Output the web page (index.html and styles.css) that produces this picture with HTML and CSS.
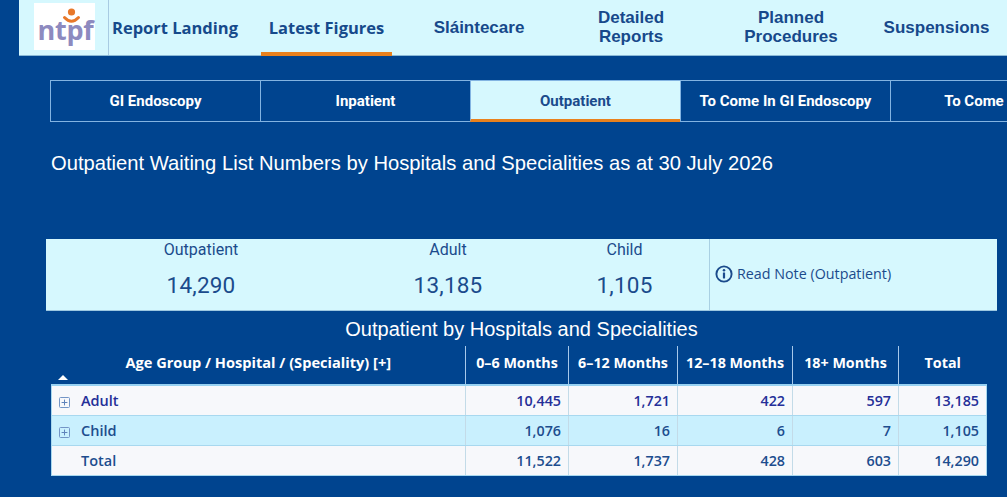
FILE: index.html
```html
<!DOCTYPE html>
<html lang="en">
<head>
<meta charset="utf-8">
<title>Latest Figures - Outpatient</title>
<link rel="stylesheet" href="styles.css">
</head>
<body>
<header class="topbar">
  <div class="brand">
    <div class="logo">
      <span class="logo-text">ntpf</span>
      <svg class="logo-mark" width="61" height="47" viewBox="0 0 61 47" aria-hidden="true">
        <circle cx="36.5" cy="9" r="3.6" fill="#e8782a"/>
        <path d="M29.5 14.5 Q36.5 22 43.5 14.5" fill="none" stroke="#e8782a" stroke-width="3" stroke-linecap="round"/>
      </svg>
    </div>
  </div>
  <nav class="menu">
    <a class="menu-item seg">Report Landing</a>
    <a class="menu-item seg active">Latest Figures</a>
    <a class="menu-item">Sláintecare</a>
    <a class="menu-item">Detailed<br>Reports</a>
    <a class="menu-item">Planned<br>Procedures</a>
    <a class="menu-item">Suspensions</a>
  </nav>
</header>

<div class="tabs">
  <div class="tab">GI Endoscopy</div>
  <div class="tab">Inpatient</div>
  <div class="tab active">Outpatient</div>
  <div class="tab">To Come In GI Endoscopy</div>
  <div class="tab tab-wide">To Come In Inpatient</div>
</div>

<h1 class="page-title">Outpatient Waiting List Numbers by Hospitals and Specialities as at 30 July 2026</h1>

<section class="kpi">
  <div class="kpi-cell">
    <div class="kpi-label">Outpatient</div>
    <div class="kpi-value">14,290</div>
  </div>
  <div class="kpi-cell">
    <div class="kpi-label">Adult</div>
    <div class="kpi-value">13,185</div>
  </div>
  <div class="kpi-cell">
    <div class="kpi-label">Child</div>
    <div class="kpi-value">1,105</div>
  </div>
  <div class="kpi-note">
    <svg class="info-icon" width="18" height="18" viewBox="0 0 18 18" aria-hidden="true">
      <circle cx="9" cy="9" r="7.6" fill="none" stroke="#1b4b8c" stroke-width="1.9"/>
      <circle cx="9" cy="5.3" r="1.25" fill="#1b4b8c"/>
      <rect x="7.9" y="7.4" width="2.2" height="6" rx="0.4" fill="#1b4b8c"/>
    </svg>
    <span>Read Note (Outpatient)</span>
  </div>
</section>

<div class="table-title">Outpatient by Hospitals and Specialities</div>

<table class="matrix">
  <thead>
    <tr>
      <th class="th-name c-name">Age Group / Hospital / (Speciality) [+]<span class="sort-arrow"></span></th>
      <th class="c-a">0–6 Months</th>
      <th class="c-b">6–12 Months</th>
      <th class="c-c">12–18 Months</th>
      <th class="c-d">18+ Months</th>
      <th class="c-e">Total</th>
    </tr>
  </thead>
  <tbody>
    <tr class="row-adult">
      <td class="name"><svg class="expand" width="11" height="11" viewBox="0 0 11 11" aria-hidden="true"><rect x="0.5" y="0.5" width="10" height="10" rx="1" fill="none" stroke="#7395c6"/><path d="M5.5 2.6v5.8M2.6 5.5h5.8" stroke="#5f83bb" stroke-width="1"/></svg>Adult</td>
      <td>10,445</td><td>1,721</td><td>422</td><td>597</td><td>13,185</td>
    </tr>
    <tr class="row-child">
      <td class="name"><svg class="expand" width="11" height="11" viewBox="0 0 11 11" aria-hidden="true"><rect x="0.5" y="0.5" width="10" height="10" rx="1" fill="none" stroke="#7395c6"/><path d="M5.5 2.6v5.8M2.6 5.5h5.8" stroke="#5f83bb" stroke-width="1"/></svg>Child</td>
      <td>1,076</td><td>16</td><td>6</td><td>7</td><td>1,105</td>
    </tr>
    <tr class="row-total">
      <td class="name total-name">Total</td>
      <td>11,522</td><td>1,737</td><td>428</td><td>603</td><td>14,290</td>
    </tr>
  </tbody>
</table>
</body>
</html>
```

FILE: styles.css
```css
html, body {
  margin: 0;
  padding: 0;
}
body {
  background: #00448f;
  width: 1007px;
  height: 497px;
  overflow: hidden;
  font-family: "Liberation Sans", Arial, sans-serif;
}

/* ---------- top bar ---------- */
.topbar {
  margin-left: 19px;
  height: 55px;
  background: #d6f8fe;
  border-bottom: 1px solid #8bb9d6;
  display: flex;
}
.brand {
  width: 91px;
  box-sizing: border-box;
  border-right: 1px solid #a8cbe2;
  padding-left: 15px;
}
.logo {
  position: relative;
  margin-top: 3px;
  width: 61px;
  height: 47px;
  background: #ffffff;
  display: flex;
  align-items: flex-end;
  justify-content: center;
}
.logo-text {
  font-family: "Open Sans", "DejaVu Sans", sans-serif;
  font-weight: 700;
  font-size: 27px;
  line-height: 27px;
  color: #8d8abf;
  letter-spacing: -0.3px;
  margin-bottom: 7px;
  margin-left: 2px;
}
.logo-mark {
  position: absolute;
  left: 1px;
  top: 0;
}
.menu {
  display: grid;
  grid-template-columns: 132px 171px 134px 170px 150px 141px;
  height: 55px;
}
.menu-item {
  position: relative;
  display: flex;
  align-items: center;
  justify-content: center;
  text-align: center;
  color: #17498b;
  font-family: "Liberation Sans", Arial, sans-serif;
  font-weight: 700;
  font-size: 17px;
  line-height: 19px;
  padding-bottom: 1px;
}
.menu-item.seg {
  font-family: "Open Sans", "Noto Sans", sans-serif;
  font-size: 16.5px;
  color: #164a8b;
}
.menu-item.active::after {
  content: "";
  position: absolute;
  left: 20px;
  right: 20px;
  bottom: -1px;
  height: 4px;
  background: #e9811d;
}

/* ---------- tabs ---------- */
.tabs {
  display: flex;
  margin: 24px 0 0 50px;
  width: max-content;
}
.tab {
  width: 211px;
  height: 42px;
  box-sizing: border-box;
  border: 1px solid #83b4e2;
  margin-right: -1px;
  display: flex;
  align-items: center;
  justify-content: center;
  color: #ffffff;
  font-family: Roboto, "Liberation Sans", sans-serif;
  font-weight: 700;
  font-size: 15px;
  white-space: nowrap;
}
.tab.tab-wide {
  width: 248px;
}
.tab.active {
  background: #d6f8fe;
  color: #1b4b8c;
  border-bottom: 3px solid #e9811d;
  padding-top: 2px;
}

/* ---------- title ---------- */
.page-title {
  margin: 29px 0 0 51px;
  font-family: "Liberation Sans", Arial, sans-serif;
  font-weight: 400;
  font-size: 20.2px;
  line-height: 24px;
  color: #ffffff;
}

/* ---------- KPI card ---------- */
.kpi {
  margin: 64px 0 0 46px;
  width: 951px;
  height: 72px;
  box-sizing: border-box;
  background: #d6f8fe;
  border-bottom: 1px solid #9cc7e0;
  display: grid;
  grid-template-columns: 310px 184px 169px 288px;
}
.kpi-cell {
  display: flex;
  flex-direction: column;
  align-items: center;
  padding-top: 1px;
  color: #1b4b8c;
  font-family: Roboto, "Liberation Sans", sans-serif;
}
.kpi-label {
  font-size: 16px;
  line-height: 20px;
}
.kpi-value {
  margin-top: 11px;
  font-size: 22.5px;
  line-height: 28px;
  letter-spacing: 0.2px;
}
.kpi-note {
  border-left: 1px solid #a9d0e3;
  display: flex;
  align-items: center;
  gap: 4px;
  padding-left: 5px;
  padding-bottom: 2px;
  color: #1b4b8c;
  font-family: "Open Sans", "DejaVu Sans", sans-serif;
  font-size: 14.3px;
}

/* ---------- table ---------- */
.table-title {
  margin: 6px 0 0 46px;
  width: 951px;
  text-align: center;
  font-family: "Liberation Sans", Arial, sans-serif;
  font-size: 20px;
  line-height: 24px;
  color: #ffffff;
}
.matrix {
  margin: 5px 0 0 51px;
  width: 935px;
  table-layout: fixed;
  border-collapse: collapse;
  border-spacing: 0;
  font-family: "Open Sans", "Noto Sans", sans-serif;
}
.matrix th,
.matrix td {
  box-sizing: border-box;
}
.c-name { width: 414px; }
.c-a { width: 103px; }
.c-b { width: 109px; }
.c-c { width: 115px; }
.c-d { width: 106px; }
.c-e { width: 88px; }

.matrix th {
  height: 39px;
  padding: 0 0 6px 0;
  color: #ffffff;
  font-weight: 700;
  font-size: 14.3px;
  text-align: center;
  white-space: nowrap;
  border-left: 1px solid #a7c8ea;
  vertical-align: middle;
}
.matrix th.th-name {
  position: relative;
  border-left: none;
  font-size: 14.6px;
}
.sort-arrow {
  position: absolute;
  left: 6px;
  bottom: 4px;
  width: 0;
  height: 0;
  border-left: 5px solid transparent;
  border-right: 5px solid transparent;
  border-bottom: 5px solid #ffffff;
}
.matrix tbody tr:first-child td {
  border-top: 2px solid #97d1f2;
}
.matrix td {
  height: 30px;
  padding: 0 7px 0 0;
  text-align: right;
  font-weight: 600;
  font-size: 14.3px;
  color: #1d4d8e;
  background: #f7f8fb;
  border-bottom: 1px solid #a8d8ef;
  border-left: 1px solid #c3dbe8;
  vertical-align: middle;
}
.matrix td:first-child {
  border-left: 1px solid #a8d8ef;
}
.matrix td:last-child {
  border-right: 1px solid #a8d8ef;
}
.matrix td.name {
  text-align: left;
  padding-left: 7px;
  font-size: 14.5px;
}
.matrix td.total-name {
  padding-left: 29px;
}
.expand {
  vertical-align: -2px;
  margin-right: 11px;
}
.row-adult td {
  color: #252f98;
}
.row-child td {
  background: #c9f0fe;
}
```
